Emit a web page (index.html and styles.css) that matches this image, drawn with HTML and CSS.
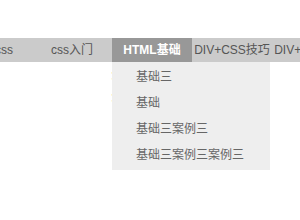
FILE: index.html
```html
<!DOCTYPE html>
<html lang="zh-CN">
<head>
  <meta charset="UTF-8">
  <title>导航菜单</title>
  <link rel="stylesheet" href="styles.css">
</head>
<body>
  <!-- 主导航 -->
  <div class="nav">
    <ul class="menu">
      <li><a href="#">学习css</a></li>
      <li><a href="#">css入门</a></li>
      <li class="current">
        <a href="#">HTML基础</a>
        <!-- 下拉菜单 -->
        <ul class="subMenu">
          <li><a href="#">基础三</a></li>
          <li><a href="#">基础</a></li>
          <li><a href="#">基础三案例三</a></li>
          <li><a href="#">基础三案例三案例三</a></li>
        </ul>
      </li>
      <li><a href="#">DIV+CSS技巧</a></li>
      <li><a href="#">DIV+CSS布局</a></li>
    </ul>
  </div>

  <!-- 正文 -->
  <div class="content">
    <p>：下拉菜单示例</p>
    <p>：鼠标经过显示</p>
  </div>
</body>
</html>
```

FILE: styles.css
```css
/* 公共样式 */
html,
body {
  min-height: 220px;
}

body {
  margin: 0;
  font-family: "Liberation Sans", Arial, "Noto Sans CJK SC", sans-serif;
  font-size: 12px;
  color: #333;
  background: #fff;
  overflow: hidden;
}

ul {
  margin: 0;
  padding: 0;
  list-style: none;
}

a {
  text-decoration: none;
  color: inherit;
}

/* 导航条 */
.nav {
  margin-top: 38px;
  height: 24px;
  background: #cbcbcb;
}

.menu {
  display: flex;
  margin-left: -48px;
  white-space: nowrap;
}

.menu > li {
  position: relative;
  flex: 0 0 80px;
  height: 24px;
  line-height: 24px;
  text-align: center;
  color: #555;
}

.menu > li.current {
  background: #989898;
  color: #fff;
  font-weight: bold;
}

/* 下拉菜单 */
.subMenu {
  position: absolute;
  top: 24px;
  left: 0;
  z-index: 10;
  width: 158px;
  padding-top: 2px;
  background: #eee;
  text-align: left;
  font-weight: normal;
}

.subMenu li {
  height: 26px;
  line-height: 26px;
  padding-left: 24px;
  color: #666;
}

.subMenu li:last-child {
  height: 28px;
}

/* 正文 */
.content {
  padding-left: 110px;
  color: #000;
}

.content p {
  margin: 6px 0 0;
  line-height: 16px;
}
```
